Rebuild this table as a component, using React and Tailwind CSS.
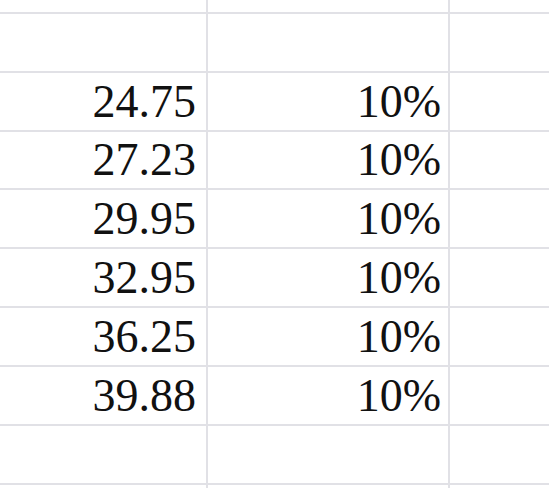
const rows = [
  { h: 'h-[14px]' },
  { h: 'h-[59px]' },
  { h: 'h-[59px]', price: '24.75', rate: '10%' },
  { h: 'h-[58px]', price: '27.23', rate: '10%' },
  { h: 'h-[59px]', price: '29.95', rate: '10%' },
  { h: 'h-[59px]', price: '32.95', rate: '10%' },
  { h: 'h-[59px]', price: '36.25', rate: '10%' },
  { h: 'h-[59px]', price: '39.88', rate: '10%' },
  { h: 'h-[59px]' },
  { h: 'h-[20px]' },
]

function Row({ h, price, rate }) {
  return (
    <div className={`${h} flex border-b-2 border-[#e1e1e6] shrink-0`}>
      <div className="w-[208px] border-r-2 border-[#e1e1e6] flex items-center justify-end pr-[10px]">
        {price}
      </div>
      <div className="w-[242px] border-r-2 border-[#e1e1e6] flex items-center justify-end pr-[7px]">
        {rate}
      </div>
      <div className="flex-1" />
    </div>
  )
}

export default function App() {
  return (
    <div className="w-[549px] h-[488px] overflow-hidden bg-white text-[#111] text-[46px] leading-none flex flex-col font-['Liberation_Serif','Times_New_Roman',serif]">
      {rows.map((r, i) => (
        <Row key={i} {...r} />
      ))}
    </div>
  )
}
